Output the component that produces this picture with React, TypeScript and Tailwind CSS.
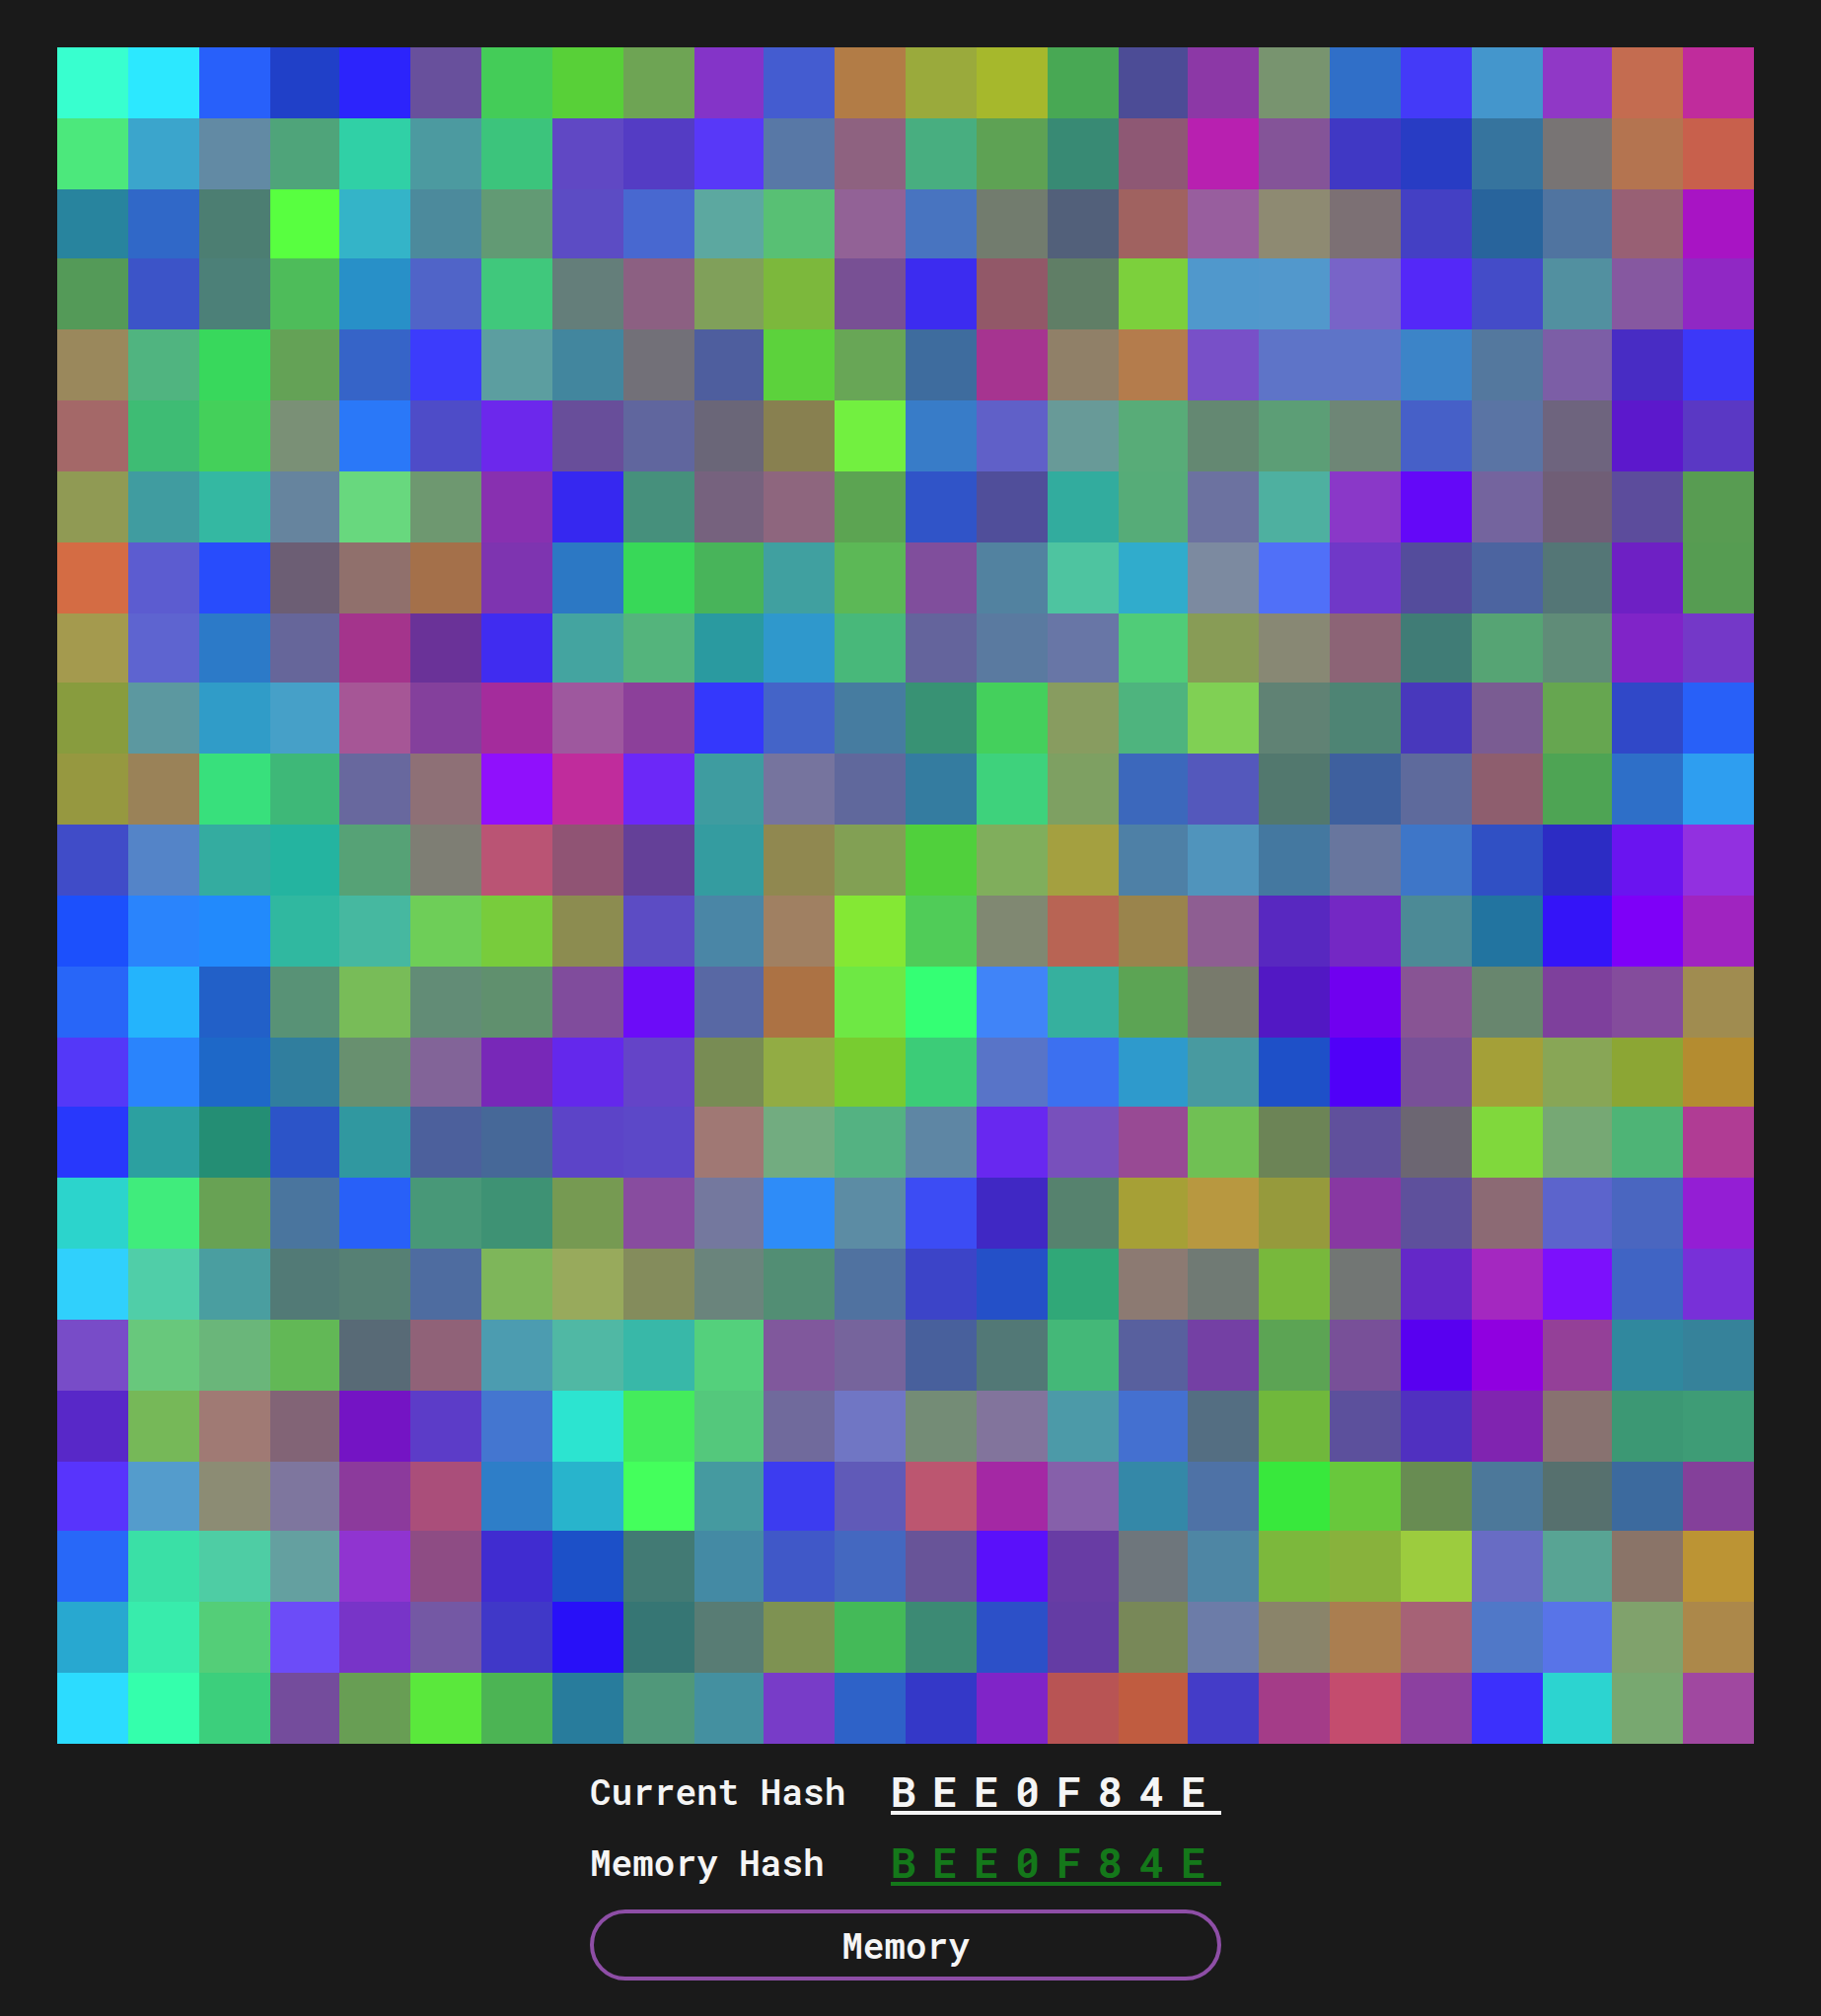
const pixels = [
  ["#38ffcf","#2ce8ff","#2860fa","#2040c8","#2c24fc","#68509c","#44cc58","#58d038","#6ea454","#8434c8","#445cd0","#b27c46","#9aaa3c","#a6b82c","#48a854","#4c4c96","#8c38a6","#78946f","#306fc8","#443af8","#4496cc","#9038c6","#c46c50","#c02c9c"],
  ["#4ce87c","#3ba5cc","#628aa4","#4fa47a","#30d0a6","#4c9aa0","#3cc47c","#6048c4","#543cc4","#5838f8","#5878a6","#8e6280","#48ae80","#5ea254","#388a74","#8e5874","#b820b0","#845498","#4038c4","#283cc4","#36749e","#787474","#b47450","#c8604c"],
  ["#28849e","#3068c8","#4c7e72","#58ff40","#34b4c8","#4c8a9c","#629a74","#5c4cc4","#4868d0","#5ca8a0","#58c074","#926296","#4874c0","#727c6e","#52607a","#a06260","#985e9e","#8e8a72","#7c7074","#4440c4","#28649c","#5074a0","#986074","#a814c4"],
  ["#549a58","#3c54c8","#4c8078","#4ebc5a","#2890c8","#5064c8","#40c87c","#647e7a","#8c6082","#80a05a","#7cb83c","#785094","#3c2cf0","#925868","#607e66","#7cd03c","#5098cc","#5298cc","#7864c8","#5428f8","#444cc8","#5290a0","#8658a0","#9028c4"],
  ["#9a885c","#50b480","#38d85c","#64a256","#3664c8","#3c3cfc","#5c9ea0","#42869e","#727078","#4e5e9e","#5cd23c","#68a656","#3e6c9e","#a63490","#908068","#b47c4c","#7850c8","#5e74c8","#5e74c8","#3c84c8","#54789e","#7c5ea6","#482cc4","#3c38f8"],
  ["#a46868","#3ebc74","#44d05a","#7a9076","#2a78f8","#4e4cc8","#6c28ec","#684e9a","#60669e","#6a6678","#888050","#72f040","#387cc8","#6060c8","#689a98","#58ac78","#648872","#5c9e76","#6e8676","#4660c8","#5a74a4","#6e647e","#5c18cc","#5a38c4"],
  ["#909a54","#409ca0","#34b8a2","#66849e","#68d87e","#6e9870","#8830b0","#3628f0","#46907c","#76627e","#8e667e","#5ca452","#3054c8","#504e9a","#32ac9e","#56ac78","#6c72a0","#4eb0a0","#8a38c8","#6408f8","#74649e","#705e76","#5c4c9c","#589c52"],
  ["#d46c44","#5c5cd0","#284cfc","#6c5e74","#90706c","#a4704a","#7e34b0","#2c78c4","#38d858","#48b45a","#40a0a0","#5cb856","#804e9c","#5282a0","#4ec4a0","#30accc","#7c8aa0","#5070f8","#7038c8","#544c9c","#4c64a0","#547676","#6e20c4","#569c52"],
  ["#a49a4e","#5e64d0","#2c7ac8","#66669a","#a4348c","#6a3298","#402cf0","#44a4a0","#54b47c","#2a9aa0","#2f98cc","#48b87a","#64649c","#5a7aa0","#6876a6","#50cc78","#889c56","#888874","#8c6476","#407c76","#56a474","#608c78","#8024c8","#7438c8"],
  ["#889c3e","#5c98a0","#309cc8","#46a0c8","#a65696","#84409c","#a42c9c","#9e589e","#8c409a","#3438fc","#4464c8","#467ca0","#389274","#44d05c","#889c60","#4eb47e","#80d054","#608274","#4e8474","#4838bc","#7a5c92","#66a650","#3048c8","#2860f8"],
  ["#969840","#9a8258","#38e07c","#3eb878","#68689e","#8e7076","#9010fc","#c02c9c","#6c28f8","#3e9ca0","#76749e","#60689c","#347ca0","#3ed27c","#7ea062","#3c68bc","#5458bc","#52786e","#3e609e","#5e6a9c","#8e5e6e","#4ea454","#2e6fc8","#2e9ef0"],
  ["#404cc8","#5484c8","#34aca0","#24b4a0","#56a276","#7e7e74","#ba5474","#905474","#644098","#349ca0","#908850","#82a054","#50d03c","#80ae5c","#a4a040","#4e80a6","#5094bc","#4478a0","#68769e","#3e76c8","#3050c4","#2c2cc4","#6a14f0","#9230e0"],
  ["#1c50fc","#2a84fc","#228afc","#30b8a0","#46b8a0","#6ece58","#78cc3c","#8c8c50","#5c4cc4","#4a86a6","#a08062","#84e834","#50cc58","#808872","#b86454","#9a844c","#8e5e92","#5828c0","#7428c4","#4c8a96","#2274a0","#3414f8","#7e00f8","#a024c0"],
  ["#2866f8","#24b4fc","#2260c8","#589276","#78bc58","#628c76","#60906e","#804c9c","#6c0cf8","#5868a4","#ac7244","#6ee844","#34ff74","#4084f8","#36b09e","#5ca454","#787a6c","#5218c4","#7000f0","#885494","#68866e","#7e409c","#844c9c","#a08c50"],
  ["#5438f8","#2a84fc","#1e68c8","#307e9e","#68906f","#826498","#7828b8","#6428ec","#6444c8","#788c54","#92ac44","#78cc30","#3ccc78","#5874c8","#3c70f0","#2e9acc","#489aa0","#1e50c8","#5000f8","#785098","#a4a038","#88a656","#8ca634","#b48c30"],
  ["#2838fc","#2ca0a0","#248e74","#2c54c8","#3098a0","#4c609c","#466898","#5c44c8","#5c48c8","#a07874","#72ac80","#54b282","#5e86a4","#6828f0","#7850bc","#984a94","#70c054","#6c8456","#60509c","#6c6672","#80d83c","#76a874","#4eb476","#b03c94"],
  ["#2cd4cc","#40ec7c","#68a254","#4a759e","#2860f8","#489878","#3e9274","#769a52","#884c9f","#74789e","#2e8cf8","#5c8ca4","#3c4cf4","#4028c4","#56826e","#a6a036","#b89840","#969a3c","#8838a2","#5e509c","#8c6a74","#5c64cc","#4a66c0","#941ed4"],
  ["#30d0fc","#50cea8","#4a9ea0","#527a76","#568074","#4e6ca0","#7eb65a","#98aa5c","#848c5c","#6a847c","#528e74","#5072a0","#3c44c8","#2450c8","#30a878","#8c7a72","#707a74","#78b83c","#727674","#6428c8","#a428c0","#7c10fc","#4064c4","#7830d8"],
  ["#784cc8","#68c87c","#6ab67a","#62b856","#586a76","#906278","#4c9cb0","#50b8a4","#38b8a8","#54d07c","#80589c","#76649c","#48609c","#527876","#44b878","#58609e","#7440a4","#5ca454","#785098","#5800f0","#9000e0","#944098","#30889e","#36829a"],
  ["#5828c8","#76b858","#a07a74","#826476","#7414c4","#5c3cc8","#4476d0","#2ce4d0","#44ec5c","#54c87c","#706a9c","#7076c4","#748c76","#82749c","#4c9aa8","#4470d0","#546e82","#70b83c","#5c509c","#5030c0","#8024b0","#887270","#3c9874","#3e9c76"],
  ["#5834fc","#549ccc","#8c8c74","#7e769e","#8c3a9c","#aa4e7a","#2e7ec8","#28b4cc","#44ff5c","#459aa0","#3c3cf0","#605ab8","#bc5670","#a428a4","#8660aa","#3488a8","#4e72a6","#38e83c","#68c83c","#688c52","#4c789a","#56706e","#3c6a9e","#84409a"],
  ["#2868f8","#3ae0a6","#4ecda4","#64a0a0","#9034d0","#8e4c84","#402cd0","#1c50c8","#427a74","#448aa4","#4058c8","#4468c0","#685498","#5a10fa","#683ca4","#6e767c","#4e86a4","#7cb83c","#88b23c","#9ccc3e","#686cc4","#58a494","#8a7468","#bc9434"],
  ["#28a8d0","#38ecac","#54ce78","#6c4cf8","#7834c8","#7458a4","#4038c8","#2810f8","#367674","#587c74","#7e9252","#44ba58","#3c8a74","#2c50c8","#643ca4","#788858","#6c7ca8","#8a846a","#aa7e50","#a66276","#5078c8","#5874e8","#80a26c","#ac884a"],
  ["#2cdcff","#34ffac","#3ccf7c","#744c9c","#689e54","#5ae83c","#4cb454","#287c9c","#50987a","#4490a0","#783cc8","#2e62c8","#3438c8","#8024c8","#b85454","#c05c40","#443cc8","#a43c88","#c44c6e","#8c40a0","#3c30fc","#2cd4d0","#78a870","#a048a0"],
];

const HashRow = ({ label, hash, hashClass }: { label: string; hash: string; hashClass: string }) => (
  <div className="flex h-[72px] items-end">
    <span className="w-[305px] pb-[3px] text-[36px] leading-[42px] font-semibold text-[#f5f5f5]">
      {label}
    </span>
    <span className={`w-[335px] border-b-4 text-[42px] leading-[41px] tracking-[16.8px] font-bold ${hashClass}`}>
      {hash}
    </span>
  </div>
);

export default function App() {
  return (
    <div className="min-h-screen bg-[#1a1a1a] pt-[48px] pl-[58px] pb-[36px] font-['Roboto_Mono','DejaVu_Sans_Mono',monospace]">
      {/* the cells are not all the same size: every sixth track is 2px narrower */}
      <div className="grid w-[1720px] grid-cols-[repeat(3,72px)_70px_repeat(5,72px)_70px_repeat(5,72px)_70px_repeat(5,72px)_70px_repeat(2,72px)] grid-rows-[repeat(2,72px)_70px_repeat(5,72px)_70px_repeat(5,72px)_70px_repeat(5,72px)_70px_repeat(3,72px)]">
        {pixels.flat().map((color, i) => (
          <div key={i} style={{ backgroundColor: color }} />
        ))}
      </div>
      <div className="ml-[540px] w-[640px]">
        <HashRow label="Current Hash" hash="BEE0F84E" hashClass="border-[#f5f5f5] text-[#f5f5f5]" />
        <HashRow label="Memory Hash" hash="BEE0F84E" hashClass="border-[#14781a] text-[#14781a]" />
        <button
          type="button"
          className="mt-[24px] h-[72px] w-full rounded-[36px] border-4 border-[#8e4ea6] text-[36px] font-semibold text-[#f5f5f5]"
        >
          Memory
        </button>
      </div>
    </div>
  );
}
